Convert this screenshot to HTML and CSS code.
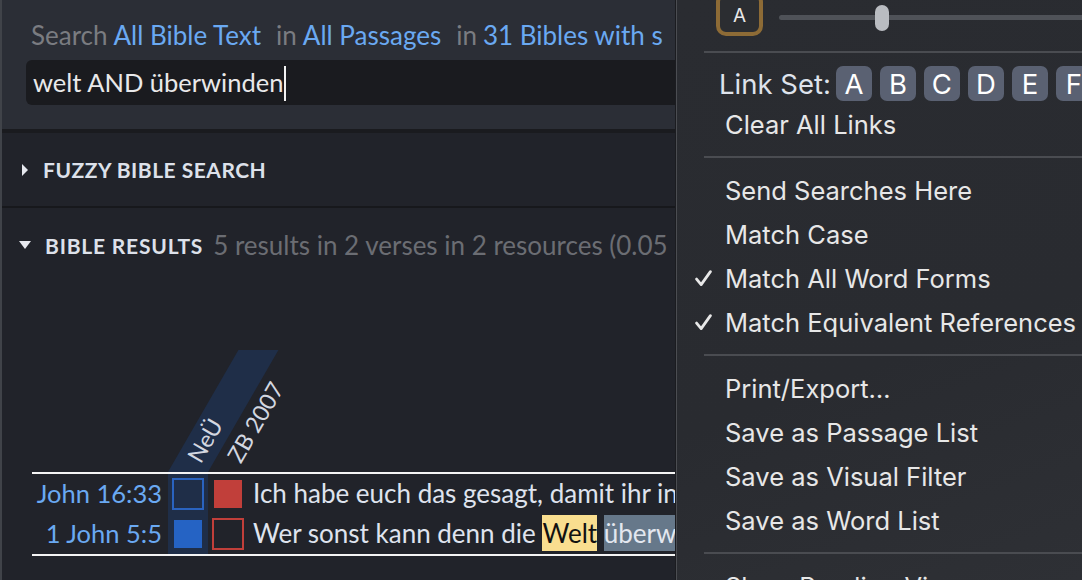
FILE: index.html
```html
<!DOCTYPE html>
<html>
<head>
<meta charset="utf-8">
<link rel="stylesheet" href="styles.css">
</head>
<body>
<div class="app">
  <div class="left">
    <div class="search-head">
      <div class="search-line"><span class="muted">Search</span><span class="link">All Bible Text</span><span class="muted in">in</span><span class="link">All Passages</span><span class="muted in">in</span><span class="link">31 Bibles with s</span></div>
      <div class="query">welt AND überwinden<span class="caret"></span></div>
    </div>
    <div class="rule-dark"></div>
    <div class="section-head fuzzy"><span class="tri-right"></span>FUZZY BIBLE SEARCH</div>
    <div class="rule-thin"></div>
    <div class="section-head results"><span class="tri-down"></span>BIBLE RESULTS<span class="summary">5 results in 2 verses in 2 resources (0.05 seconds)</span></div>
    <div class="grid">
      <div class="grid-head">
        <div class="ref-col"></div>
        <div class="res-col"><div class="band"></div><span class="res-label">NeÜ</span></div>
        <div class="res-col"><span class="res-label">ZB 2007</span></div>
      </div>
      <div class="rows">
        <div class="row">
          <div class="ref-col ref">John 16:33</div>
          <div class="res-col shaded"><span class="mark outline-blue"></span></div>
          <div class="res-col"><span class="mark fill-red"></span></div>
          <div class="verse">Ich habe euch das gesagt, damit ihr in mir Frieden habt.</div>
        </div>
        <div class="row">
          <div class="ref-col ref">1 John 5:5</div>
          <div class="res-col shaded"><span class="mark fill-blue"></span></div>
          <div class="res-col"><span class="mark outline-red"></span></div>
          <div class="verse">Wer sonst kann denn die <span class="hit">Welt</span> <span class="hit2">überwinden</span> als nur der, der glaubt?</div>
        </div>
      </div>
    </div>
  </div>
  <div class="menu">
    <div class="slider-row">
      <div class="font-btn">A</div>
      <div class="slider">
        <div class="ticks"><span class="tick first"></span><span class="tick"></span><span class="tick"></span><span class="tick"></span><span class="tick"></span><span class="tick"></span><span class="tick"></span></div>
        <div class="track"></div>
        <div class="thumb"></div>
      </div>
    </div>
    <div class="sep"></div>
    <div class="linkset">
      <span class="linkset-label">Link Set:</span>
      <span class="lbtn">A</span><span class="lbtn">B</span><span class="lbtn">C</span><span class="lbtn">D</span><span class="lbtn">E</span><span class="lbtn">F</span>
    </div>
    <div class="item"><span class="chk"></span>Clear All Links</div>
    <div class="sep"></div>
    <div class="item"><span class="chk"></span>Send Searches Here</div>
    <div class="item"><span class="chk"></span>Match Case</div>
    <div class="item"><span class="chk"><svg width="17" height="17" viewBox="0 0 16 16"><path d="M1.5 8.5 L5.8 13.8 L14.5 1.5" fill="none" stroke="#e8e8e8" stroke-width="2.6" stroke-linecap="round" stroke-linejoin="round"/></svg></span>Match All Word Forms</div>
    <div class="item"><span class="chk"><svg width="17" height="17" viewBox="0 0 16 16"><path d="M1.5 8.5 L5.8 13.8 L14.5 1.5" fill="none" stroke="#e8e8e8" stroke-width="2.6" stroke-linecap="round" stroke-linejoin="round"/></svg></span>Match Equivalent References</div>
    <div class="sep"></div>
    <div class="item"><span class="chk"></span>Print/Export…</div>
    <div class="item"><span class="chk"></span>Save as Passage List</div>
    <div class="item"><span class="chk"></span>Save as Visual Filter</div>
    <div class="item"><span class="chk"></span>Save as Word List</div>
    <div class="sep"></div>
    <div class="item"><span class="chk"></span>Show Reading View</div>
  </div>
</div>
</body>
</html>
```

FILE: styles.css
```css
html, body {
  margin: 0;
  padding: 0;
  width: 1082px;
  height: 580px;
  overflow: hidden;
  background: #21232a;
}

.app {
  display: flex;
  width: 1082px;
  height: 580px;
  overflow: hidden;
}

.left {
  flex: none;
  width: 673px;
  height: 580px;
  border-left: 2px solid #404349;
  border-right: 1px solid #1b1c20;
  background: #21232a;
  overflow: hidden;
  font-family: "Lato", "Liberation Sans", sans-serif;
  white-space: nowrap;
}

.search-head {
  height: 129px;
  background: #2b2e36;
  padding: 20px 0 0 24px;
  box-sizing: border-box;
}

.search-line {
  height: 30px;
  line-height: 30px;
  font-size: 26px;
  padding-left: 5px;
  overflow: hidden;
}

.muted { color: #7a7c81; }
.link { color: #6aa9f2; margin-left: 6px; }
.in { margin-left: 15px; }

.query {
  margin-top: 10px;
  height: 45px;
  line-height: 45px;
  margin-right: -20px;
  background: #1a1b1f;
  border-radius: 6px;
  padding-left: 7px;
  font-size: 25.5px;
  color: #e9e9ea;
}

.caret {
  display: inline-block;
  width: 2px;
  height: 35px;
  background: #f2f2f2;
  vertical-align: middle;
  margin-left: 1px;
  position: relative;
  top: -2px;
}

.rule-dark { height: 4px; background: #1a1b1f; }
.rule-thin { height: 2px; background: #17181c; }

.section-head {
  display: flex;
  align-items: center;
  font-size: 21px;
  font-weight: 700;
  letter-spacing: 0.5px;
  color: #dde1ea;
}

.fuzzy { height: 73px; padding-left: 20px; }
.results { height: 74px; padding-left: 17px; letter-spacing: 0.8px; }

.tri-right {
  width: 0;
  height: 0;
  border-left: 6px solid #e6e8ee;
  border-top: 6px solid transparent;
  border-bottom: 6px solid transparent;
  margin-right: 15px;
}

.tri-down {
  width: 0;
  height: 0;
  border-top: 8px solid #e6e8ee;
  border-left: 6px solid transparent;
  border-right: 6px solid transparent;
  margin-right: 14px;
}

.summary {
  margin-left: 10px;
  font-weight: 400;
  font-size: 26px;
  letter-spacing: 0;
  color: #6b6d73;
}

.grid { margin-left: 30px; }

.grid-head {
  display: flex;
  height: 190px;
}

.ref-col { flex: none; width: 136px; }

.res-col {
  flex: none;
  width: 40px;
  position: relative;
  display: flex;
  align-items: center;
  justify-content: center;
}

.band {
  position: absolute;
  left: 0;
  bottom: 0;
  width: 40px;
  height: 122px;
  background: #1f2e48;
  transform: skewX(-30deg);
  transform-origin: bottom left;
}

.res-label {
  position: absolute;
  left: 25px;
  bottom: 0px;
  font-size: 23px;
  line-height: 24px;
  color: #d3d7e0;
  transform: rotate(-60deg);
  transform-origin: 0 50%;
}

.rows {
  border-top: 2px solid #f4f4f4;
  border-bottom: 2px solid #f4f4f4;
}

.row {
  display: flex;
  height: 40px;
  align-items: stretch;
}

.ref {
  text-align: right;
  padding-right: 6px;
  box-sizing: border-box;
  line-height: 38px;
  font-size: 25.5px;
  color: #6aa9f2;
}

.shaded { background: #1f2e48; }

.mark { display: block; box-sizing: border-box; }
.outline-blue { width: 32px; height: 32px; border: 2px solid #2a63bf; background: #1f2e48; }
.fill-blue { width: 28px; height: 28px; background: #2563c4; }
.fill-red { width: 28px; height: 28px; background: #c13f3a; }
.outline-red { width: 32px; height: 32px; border: 2px solid #c13f3a; }

.verse {
  padding-left: 5px;
  line-height: 38px;
  font-size: 26px;
  color: #dfe3ee;
}

.hit {
  background: #f9de8f;
  color: #111;
  display: inline-block;
  line-height: 36px;
}

.hit2 {
  background: #66788a;
  color: #e3e7ef;
  display: inline-block;
  line-height: 36px;
}

/* menu */
.menu {
  flex: none;
  width: 405px;
  height: 580px;
  border-left: 1px solid #4b4d52;
  background: linear-gradient(160deg, #2a2c31 0%, #292b30 60%, #2e3035 100%);
  font-family: "Inter", "Liberation Sans", sans-serif;
  font-size: 25.5px;
  color: #e7e7e7;
  white-space: nowrap;
  overflow: hidden;
}

.slider-row {
  display: flex;
  align-items: flex-start;
  height: 49px;
  margin-top: -8px;
  padding-left: 39px;
}

.font-btn {
  flex: none;
  width: 47px;
  height: 44px;
  box-sizing: border-box;
  border: 4px solid #8d6b36;
  border-radius: 10px;
  background: #2b2d31;
  color: #e8e8e8;
  font-size: 19px;
  display: flex;
  align-items: center;
  justify-content: center;
  padding-top: 3px;
}

.slider {
  position: relative;
  margin-left: 16px;
  width: 320px;
  padding-top: 14px;
}

.ticks { display: flex; height: 9px; }
.tick { width: 2px; height: 9px; background: #5d6066; margin-right: 46px; }
.tick.first { margin-right: 52px; }

.track {
  height: 5px;
  background: #4f5258;
  border-radius: 3px;
}

.thumb {
  position: absolute;
  left: 96px;
  top: 13px;
  width: 14px;
  height: 26px;
  border-radius: 7px;
  background: #b9bcc1;
}

.sep {
  height: 2px;
  background: #4a4c51;
  margin: 10px 0 10px 27px;
}

.linkset {
  display: flex;
  align-items: center;
  height: 37px;
  margin-top: 12px;
  padding-left: 42px;
}

.linkset-label {
  color: #dfe3ec;
  font-size: 27.5px;
  margin-right: 5px;
}

.lbtn {
  flex: none;
  width: 36px;
  height: 35px;
  border-radius: 7px;
  background: #5a6172;
  color: #ffffff;
  font-size: 27.5px;
  display: flex;
  align-items: center;
  justify-content: center;
  margin-right: 8px;
}

.item {
  display: flex;
  align-items: center;
  height: 44px;
  padding-left: 18px;
}

.chk {
  flex: none;
  width: 30px;
  display: flex;
  align-items: center;
}
```
